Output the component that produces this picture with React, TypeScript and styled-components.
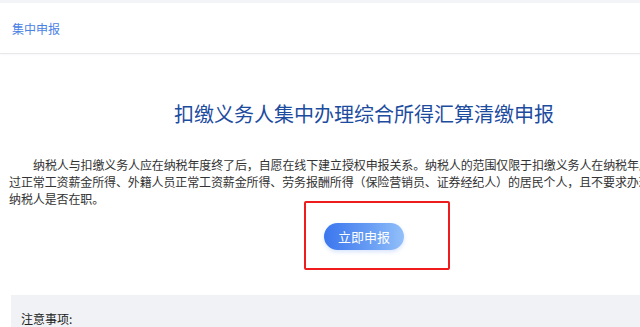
import { createGlobalStyle, styled } from "styled-components";

const GlobalStyle = createGlobalStyle`
  html, body {
    margin: 0;
    padding: 0;
    background: #ffffff;
    overflow: hidden;
    font-family: "Noto Sans CJK SC", "Noto Sans", sans-serif;
  }
`;

const Page = styled.div`
  width: 728px;
  border-top: 3px solid #f3f4f8;
`;

const Header = styled.header`
  height: 50px;
  padding-left: 12px;
  display: flex;
  align-items: center;
  border-bottom: 1px solid #e6e8eb;
  box-shadow: 0 1px 2px rgba(0, 0, 0, 0.03);
`;

const HeaderTitle = styled.span`
  font-size: 12px;
  color: #4a82e4;
`;

const Main = styled.main`
  position: relative;
  padding-top: 46px;
`;

const Title = styled.h1`
  margin: 0;
  text-align: center;
  font-size: 20px;
  font-weight: 400;
  line-height: 28px;
  color: #1d4c9f;
`;

const Intro = styled.div`
  margin-top: 28px;
  padding-left: 9px;
  font-size: 12px;
  line-height: 17px;
  letter-spacing: -0.12px;
  color: #333333;
`;

const IntroLine = styled.div<{ $indent?: boolean }>`
  white-space: nowrap;
  padding-left: ${(p) => (p.$indent ? "24px" : "0")};
`;

const Actions = styled.div`
  display: flex;
  justify-content: center;
  padding-top: 16px;
`;

const ReportButton = styled.button`
  width: 80px;
  height: 27px;
  border: none;
  border-radius: 14px;
  background: linear-gradient(90deg, #3b76ee 0%, #6a9ff4 60%, #93c0fa 100%);
  color: #ffffff;
  font-family: inherit;
  font-size: 13px;
  cursor: pointer;
  box-shadow: 0 2px 4px rgba(59, 118, 238, 0.2);
`;

const Highlight = styled.div`
  position: absolute;
  left: 304px;
  top: 147px;
  width: 142px;
  height: 65px;
  border: 2px solid #ee1c1c;
  border-radius: 2px;
  pointer-events: none;
`;

const Notice = styled.section`
  margin: 45px 0 0 11px;
  padding: 15px 10px 10px;
  background: #f0f2f5;
  min-height: 60px;
`;

const NoticeTitle = styled.div`
  font-size: 12px;
  color: #222222;
`;

export default function App() {
  return (
    <>
      <GlobalStyle />
      <Page>
        <Header>
          <HeaderTitle>集中申报</HeaderTitle>
        </Header>
        <Main>
          <Title>扣缴义务人集中办理综合所得汇算清缴申报</Title>
          <Intro>
            <IntroLine $indent>
              纳税人与扣缴义务人应在纳税年度终了后，自愿在线下建立授权申报关系。纳税人的范围仅限于扣缴义务人在纳税年度内通
            </IntroLine>
            <IntroLine>
              过正常工资薪金所得、外籍人员正常工资薪金所得、劳务报酬所得（保险营销员、证券经纪人）的居民个人，且不要求办理汇算的
            </IntroLine>
            <IntroLine>纳税人是否在职。</IntroLine>
          </Intro>
          <Actions>
            <ReportButton>立即申报</ReportButton>
          </Actions>
          <Highlight />
          <Notice>
            <NoticeTitle>注意事项:</NoticeTitle>
          </Notice>
        </Main>
      </Page>
    </>
  );
}
